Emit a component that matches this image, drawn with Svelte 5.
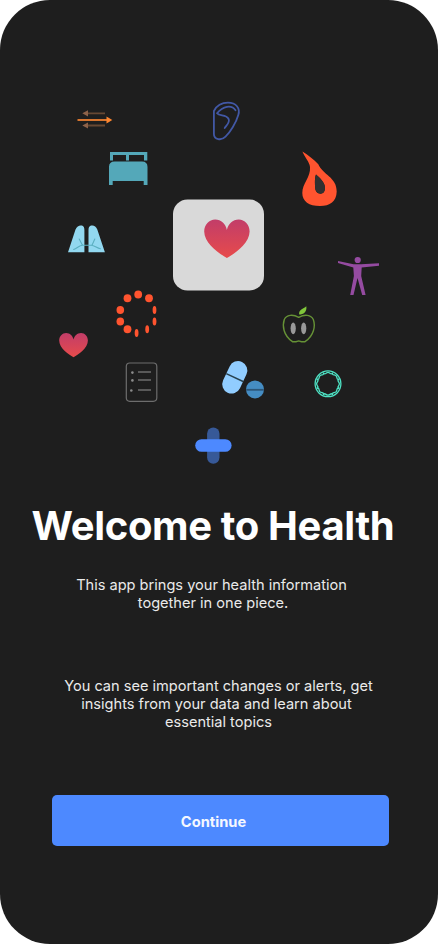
<script>
  const heartPath = 'M22.7 38.5C15 34 0 24 0 12C0 5 5 0 11 0C17 0 21.5 4.5 22.7 10.5C24 4.5 28.5 0 34.5 0C40.5 0 45.4 5 45.4 12C45.4 24 30.5 34 22.7 38.5Z';
  const beads = [
    [138.2, 294.5, 3.9, 4], [149, 298.2, 3.9, 4], [127.5, 298.2, 3.9, 4],
    [120.3, 310, 3.8, 4], [120.3, 321.6, 3.8, 4], [127.5, 329.2, 3.9, 4],
    [154.5, 310, 1.9, 4], [154.5, 321.6, 1.9, 4], [147.2, 329.2, 1.9, 4], [136.6, 333, 1.9, 4]
  ];
  const scallops = Array.from({ length: 8 }, (_, i) => i * 45);
</script>

<main class="screen">
  <svg class="illustration" width="438" height="480" viewBox="0 0 438 480" fill="none" aria-hidden="true">
    <defs>
      <linearGradient id="heart-fill" x1="0" y1="0" x2="0" y2="1">
        <stop offset="0" stop-color="#c23d69" />
        <stop offset="1" stop-color="#e74b4b" />
      </linearGradient>
    </defs>

    <g class="arrows">
      <g fill="#8d6249" stroke="#674833" stroke-width="1.8">
        <path d="M88 113.3H105M88 125.5H105" />
        <path d="M82.3 113.3L88 110.2V116.4ZM82.3 125.5L88 122.4V128.6Z" stroke="none" />
      </g>
      <path d="M77.5 120H107" stroke="#d8752e" stroke-width="2" />
      <path d="M106.5 116.6L112.3 120L106.5 123.4Z" fill="#ff862f" />
    </g>

    <g class="bed" fill="#54a8b9">
      <path d="M110 152H147.3V160.5H144V155H129V160.5H126V155H113V160.5H110Z" />
      <path d="M109 167Q109 161.5 114.5 161.5H142Q147.5 161.5 147.5 167V185H143.7V181H112.7V185H109Z" />
    </g>

    <g class="ear" stroke="#4258a5" stroke-width="1.8" stroke-linecap="round" stroke-linejoin="round">
      <path d="M213.9 111C217 105 222 102.7 228 102.7C236 102.7 240.5 108 238.3 115C236 123 230 132.5 225.5 136.7C221.5 140.8 213.9 139.8 213.9 134Z" />
      <path d="M235.5 110.2C231.5 104.5 223 106 217 113.3C219.5 116.5 226 114.2 228.5 118.7C230.3 122 227.3 124.5 224.7 128" />
    </g>

    <path fill="#ff542f" fill-rule="evenodd" d="M302.4 151.5C308 155 314 159.5 318.3 164.3C322.5 174.5 337 177.5 336.7 191.5C336.5 201.5 330 206 320 206C309 206 302.3 201.5 302.3 193C302.3 183 310.8 177.5 310 167C309.5 162 304.5 157 302.4 151.5ZM316 174.5C314.5 178 315 184 315.2 188C315.5 192 317.8 193.7 320.5 193.7C323.3 193.7 325 191.5 325 188C325 182 319.3 177.5 316 174.5Z" />
    <path fill="#303030" d="M316 174.5C314.5 178 315 184 315.2 188C315.5 192 317.8 193.7 320.5 193.7C323.3 193.7 325 191.5 325 188C325 182 319.3 177.5 316 174.5Z" />

    <g class="lungs">
      <path fill="#92d8f0" d="M68 252.2L75.5 229.5C77 225.5 80 225 82 225.6C84 226.3 84.4 228 84.4 230V252.2ZM104.9 252.2L97.3 229.5C96 225.5 93 225 91 225.6C89 226.3 88.5 228 88.5 230V252.2Z" />
      <path stroke="#5bafc0" stroke-width="1.1" stroke-linecap="round" d="M73.7 249.5C77.5 248 79 245.3 83 245.3H91C94.5 245.3 96.5 247.8 100.4 248.8M82.5 245.2L79.2 239M92 245.2L94.8 239" />
    </g>

    <rect x="173" y="199.5" width="91" height="91" rx="14.5" fill="#d9d9d9" />
    <path d={heartPath} transform="translate(204.2 219.5)" fill="url(#heart-fill)" />
    <path d={heartPath} transform="translate(59.2 332.9) scale(.632)" fill="url(#heart-fill)" />

    <g class="person" fill="#954ba1">
      <circle cx="357.7" cy="260" r="3.1" />
      <path d="M338 261L353.5 264.2H361L379 263.3V265.7L361.7 267.5L361.2 276L365.6 295H362.2L357.5 278L353.5 295H350.2L353.9 276L353.3 267.6L338 263Z" />
    </g>

    <g class="beads" fill="#ff542f">
      {#each beads as [cx, cy, rx, ry]}
        <ellipse {cx} {cy} {rx} {ry} />
      {/each}
    </g>

    <g class="list" stroke="#6d6d6d">
      <rect x="126.3" y="363" width="30.5" height="38.3" rx="3.5" stroke-width="1.2" />
      <path stroke-width="1.6" d="M138 372H151M138 380H151M138 390H151" />
      <g fill="#8b8b8b" stroke="none">
        <circle cx="132.4" cy="372.6" r="1.3" />
        <circle cx="132.4" cy="380.4" r="1.3" />
        <circle cx="131.3" cy="390.5" r="1.3" />
      </g>
    </g>

    <g class="apple">
      <path stroke="#669236" stroke-width="1.4" d="M298.7 317.3C293 314.2 286.5 314.5 284.3 319.5C282.2 325.5 283.2 335.5 292.5 341.7H296L298.7 340.9L301.5 341.7H305C314.3 335.5 315.5 325.5 313.3 319.5C311 314.5 304.5 314.2 298.7 317.3Z" />
      <path fill="#80c63b" d="M299.2 314.6C298.4 309.5 303.3 309 306.3 306.2C307.2 311.5 303.5 314.6 299.2 314.6Z" />
      <g fill="#999">
        <ellipse cx="293.2" cy="328.3" rx="2.6" ry="5.9" />
        <ellipse cx="303.7" cy="328.3" rx="2.6" ry="5.9" />
      </g>
    </g>

    <g class="ring" stroke="#4ee2c4" stroke-width="1.3" transform="translate(328 383.8)">
      <circle r="12.9" stroke-width="1.3" />
      {#each scallops as angle}
        <path transform="rotate({angle})" d="M-4.6 -11.1C-3.2 -8.4 -2 -11.4 0 -11.4C2 -11.4 3.2 -8.4 4.6 -11.1" />
      {/each}
    </g>

    <g class="pills">
      <g transform="rotate(25 234.8 377.3)">
        <rect x="225.5" y="360.3" width="18.6" height="34" rx="9.3" fill="#91cdff" />
        <path d="M225.5 377.6H244.1" stroke="#27414f" stroke-width="1.4" />
      </g>
      <circle cx="255" cy="389.4" r="9" fill="#458dc3" />
      <path d="M246.2 389.8H263.8" stroke="#2c5779" stroke-width="1.8" />
    </g>

    <rect x="207.1" y="427.5" width="12.4" height="36.3" rx="6.2" fill="#375998" />
    <rect x="195.2" y="439.2" width="36.4" height="12.6" rx="6.3" fill="#4d89ff" />
  </svg>

  <h1>Welcome to Health</h1>
  <p class="intro">
    <span>This app brings your health information</span>
    <span class="nudge-right">together in one piece.</span>
  </p>
  <p class="details">
    <span>You can see important changes or alerts, get</span>
    <span class="nudge-left">insights from your data and learn about</span>
    <span>essential topics</span>
  </p>
  <button type="button">Continue</button>
</main>

<style>
  :global(body) {
    margin: 0;
    background: #fff;
  }

  .screen {
    display: flex;
    flex-direction: column;
    align-items: center;
    box-sizing: border-box;
    width: 438px;
    height: 944px;
    overflow: hidden;
    border-radius: 50px;
    background: #1e1e1e;
    color: #fff;
    font-family: Inter, 'Liberation Sans', sans-serif;
  }

  .illustration {
    flex: none;
    display: block;
  }

  h1 {
    margin: 22px 12px 0 0;
    font-size: 40px;
    font-weight: 700;
    line-height: 48px;
    letter-spacing: -0.35px;
    white-space: nowrap;
  }

  p {
    font-size: 14.58px;
    line-height: 18px;
    text-align: center;
    white-space: nowrap;
    color: #eaeaea;
  }

  p span {
    display: block;
  }

  .nudge-right {
    padding-left: 3px;
  }

  .nudge-left {
    padding-right: 4px;
  }

  .intro {
    margin: 26px 15px 0 0;
  }

  .details {
    margin: 65px 1px 0 0;
  }

  button {
    width: 337px;
    height: 51px;
    margin: 64px 0 0 2px;
    padding: 2px 13px 0 0;
    border: 0;
    border-radius: 5px;
    background: #4d89ff;
    color: #f4f7ff;
    font: 700 14.7px/18px Inter, 'Liberation Sans', sans-serif;
  }
</style>
